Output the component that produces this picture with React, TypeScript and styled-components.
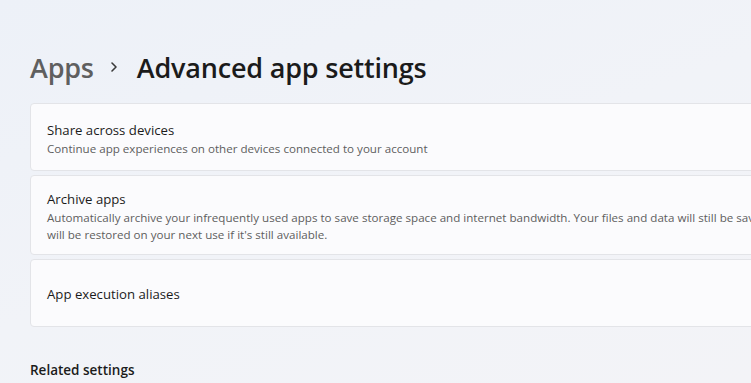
import React from "react";
import styled, { createGlobalStyle } from "styled-components";

const GlobalStyle = createGlobalStyle`
  html, body {
    margin: 0;
    padding: 0;
    overflow: hidden;
  }
  body {
    font-family: "Open Sans", "Noto Sans", sans-serif;
    background: #f1f3f8;
  }
`;

const Page = styled.div`
  width: 751px;
  height: 383px;
  overflow: hidden;
  padding: 44px 0 0 30px;
  box-sizing: border-box;
  background: linear-gradient(160deg, #edf1f8 0%, #f1f3f8 50%, #f3f3f7 100%);
`;

const Breadcrumb = styled.div`
  display: flex;
  align-items: center;
  height: 46px;
  font-family: "Open Sans", sans-serif;
  font-size: 27px;
  font-weight: 600;
  letter-spacing: -0.2px;
`;

const Crumb = styled.span<{ $current?: boolean }>`
  color: ${(p) => (p.$current ? "#1b1b1b" : "#5f5f5f")};
`;

const Chevron = styled.span`
  display: flex;
  margin: 0 19px 0 16px;
`;

const List = styled.div`
  display: flex;
  flex-direction: column;
  gap: 4px;
  width: 1000px;
  margin-top: 13px;
`;

const Card = styled.div<{ $height: number }>`
  display: flex;
  flex-direction: column;
  justify-content: center;
  height: ${(p) => p.$height}px;
  box-sizing: border-box;
  padding: 3px 16px 0;
  background: #fbfbfd;
  border: 1px solid #e3e4e8;
  border-radius: 4px;
`;

const Title = styled.div`
  font-family: "Open Sans", sans-serif;
  font-size: 13.2px;
  color: #1b1b1b;
  line-height: 19px;
`;

const Desc = styled.div`
  font-family: "Open Sans", sans-serif;
  font-size: 11.6px;
  color: #5e5e5e;
  line-height: 17px;
  white-space: nowrap;
`;

const SectionHeading = styled.div`
  margin-top: 34px;
  font-family: "Open Sans", sans-serif;
  font-size: 13.5px;
  font-weight: 600;
  color: #1b1b1b;
`;

export default function App() {
  return (
    <>
      <GlobalStyle />
      <Page>
        <Breadcrumb>
          <Crumb>Apps</Crumb>
          <Chevron>
            <svg width="8" height="12" viewBox="0 0 8 12">
              <path d="M2 2 L6 6 L2 10" fill="none" stroke="#3a3a3a" strokeWidth="1.6" strokeLinecap="round" strokeLinejoin="round" />
            </svg>
          </Chevron>
          <Crumb $current>Advanced app settings</Crumb>
        </Breadcrumb>
        <List>
          <Card $height={68}>
            <Title>Share across devices</Title>
            <Desc>Continue app experiences on other devices connected to your account</Desc>
          </Card>
          <Card $height={80}>
            <Title>Archive apps</Title>
            <Desc>
              Automatically archive your infrequently used apps to save storage space and internet bandwidth. Your files and data will still be saved, and the app
              <br />
              will be restored on your next use if it's still available.
            </Desc>
          </Card>
          <Card $height={68}>
            <Title>App execution aliases</Title>
          </Card>
        </List>
        <SectionHeading>Related settings</SectionHeading>
      </Page>
    </>
  );
}
